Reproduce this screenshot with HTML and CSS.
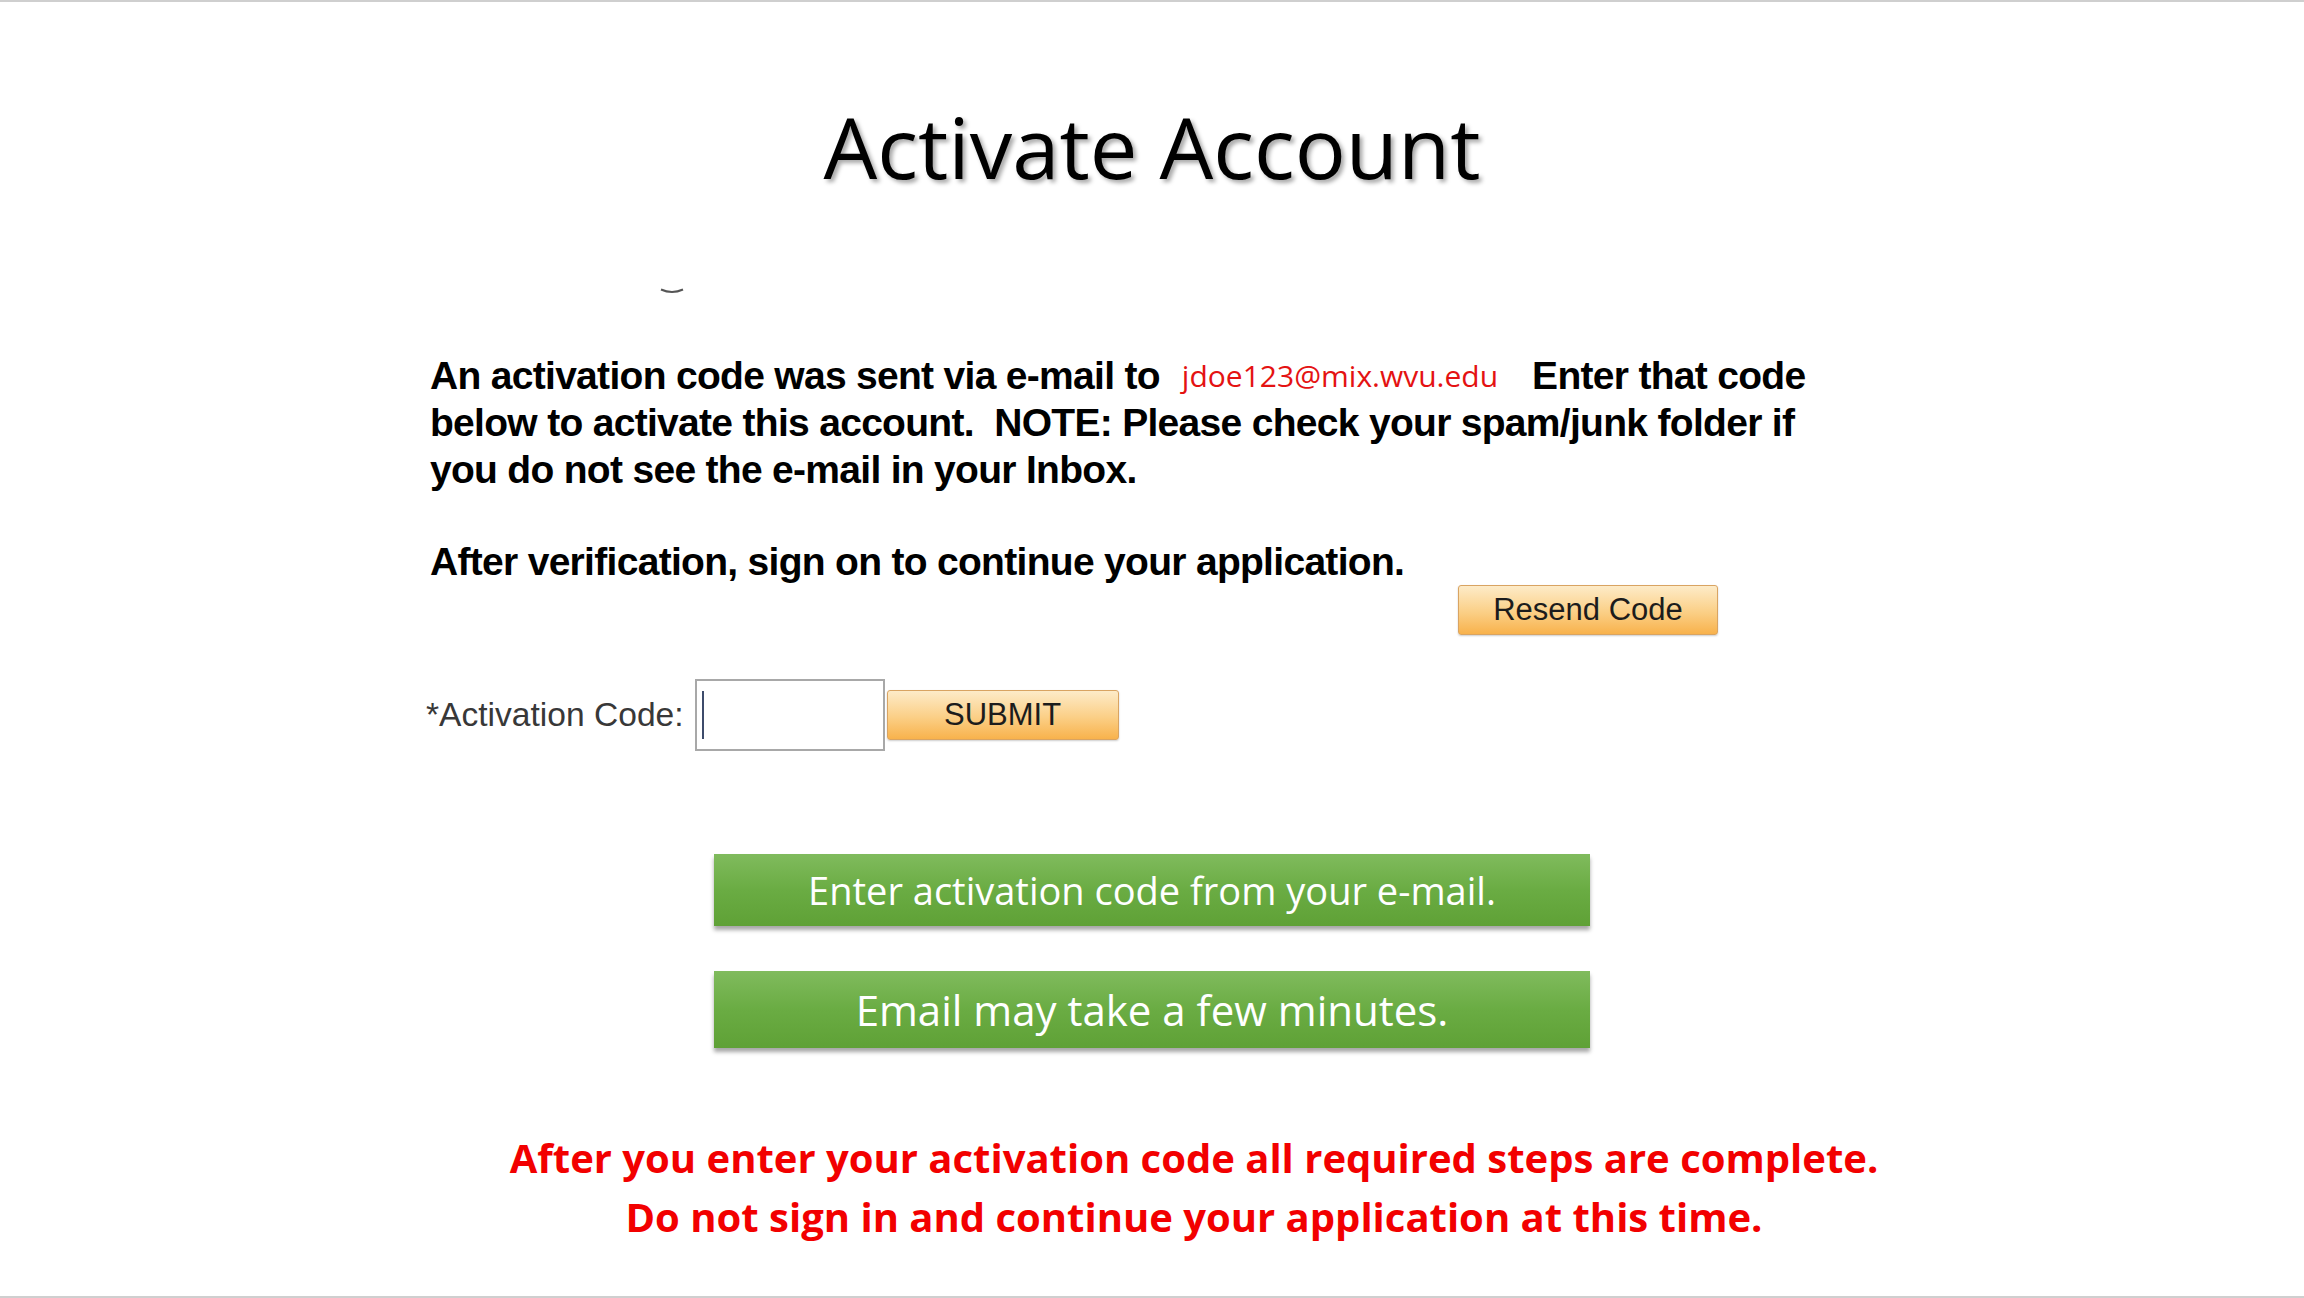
FILE: index.html
```html
<!DOCTYPE html>
<html lang="en">
<head>
  <meta charset="UTF-8" />
  <meta name="viewport" content="width=device-width, initial-scale=1" />
  <title>Activate Account</title>
  <link rel="stylesheet" href="styles.css">
</head>
<body>
  <div class="slide">
    <h1 class="title">Activate Account</h1>

    <div class="panel">
      <svg class="mark" width="24" height="6" viewBox="0 0 24 6" aria-hidden="true">
        <path d="M1 1.5 Q12 6.5 23 1.5" fill="none" stroke="#555" stroke-width="2" />
      </svg>

      <p class="message">
        An activation code was sent via e-mail to<span class="email">jdoe123@mix.wvu.edu</span><span class="after-email">Enter that code</span><br>
        below to activate this account.&nbsp; NOTE: Please check your spam/junk folder if<br>
        you do not see the e-mail in your Inbox.
      </p>

      <p class="message next-step">After verification, sign on to continue your application.</p>

      <div class="resend-row">
        <button class="orange-button resend-button">Resend Code</button>
      </div>

      <div class="code-row">
        <label for="code" class="code-label">*Activation Code:</label>
        <span class="code-field"><input type="text" id="code" /></span>
        <button class="orange-button submit-button">SUBMIT</button>
      </div>
    </div>

    <div class="hint">Enter activation code from your e-mail.</div>
    <div class="hint hint-large">Email may take a few minutes.</div>

    <p class="notice">
      After you enter your activation code all required steps are complete.<br>
      Do not sign in and continue your application at this time.
    </p>
  </div>
</body>
</html>
```

FILE: styles.css
```css
body {
  margin: 0;
  padding: 0;
  background-color: #fff;
  color: #000;
  font-family: "Open Sans", Arial, sans-serif;
}
.slide {
  height: 1298px;
  box-sizing: border-box;
  border-top: 2px solid #cfcfcf;
  border-bottom: 2px solid #cfcfcf;
  padding-top: 94px;
  display: flex;
  flex-direction: column;
}
.title {
  margin: 0;
  font-size: 85px;
  font-weight: 400;
  line-height: 100px;
  text-align: center;
  text-shadow: 3px 3px 4px rgba(0, 0, 0, 0.35);
}
.panel {
  width: 1444px;
  margin: 0 auto;
  display: flex;
  flex-direction: column;
}
.mark {
  display: block;
  margin: 92px 0 0 230px;
}
.message {
  margin: 58px 0 0;
  font-family: "Liberation Sans", Arial, sans-serif;
  font-weight: bold;
  font-size: 39px;
  letter-spacing: -0.7px;
  line-height: 47px;
  white-space: nowrap;
}
.email {
  margin-left: 22px;
  font-family: "Open Sans", sans-serif;
  font-weight: 500;
  font-size: 30px;
  letter-spacing: 0;
  color: #e41212;
  vertical-align: 2px;
}
.after-email {
  margin-left: 34px;
}
.next-step {
  margin-top: 45px;
}
.resend-row {
  display: flex;
  justify-content: flex-end;
  padding-right: 156px;
}
.orange-button {
  font-family: "Liberation Sans", Arial, sans-serif;
  font-size: 31px;
  color: #1c1c1c;
  height: 50px;
  padding: 0;
  background: linear-gradient(#fdebc8, #fbcf86 55%, #f8b24c);
  border: 1px solid #d9a462;
  border-radius: 3px;
  box-shadow: 0 1px 2px rgba(0, 0, 0, 0.2);
  cursor: pointer;
}
.resend-button {
  width: 260px;
}
.submit-button {
  width: 232px;
  margin-left: 2px;
}
.code-row {
  display: flex;
  align-items: center;
  margin: 44px 0 0 -4px;
}
.code-label {
  font-family: "Liberation Sans", Arial, sans-serif;
  font-size: 33.6px;
  color: #383838;
  margin-right: 11px;
}
.code-field {
  position: relative;
  display: block;
}
.code-field input {
  display: block;
  width: 190px;
  height: 72px;
  box-sizing: border-box;
  border: 2px solid #a8a8a8;
  background-color: #fff;
  outline: none;
}
.code-field::after {
  content: "";
  position: absolute;
  left: 7px;
  top: 12px;
  width: 2px;
  height: 48px;
  background-color: #3d4b6b;
}
.hint {
  width: 876px;
  height: 72px;
  margin: 103px auto 0;
  display: flex;
  align-items: center;
  justify-content: center;
  background: linear-gradient(#80bb5d, #6aac43 50%, #5fa136);
  box-shadow: 0 4px 4px rgba(0, 0, 0, 0.35);
  color: #fff;
  font-size: 38px;
}
.hint-large {
  height: 77px;
  margin-top: 45px;
  font-size: 42px;
}
.notice {
  margin: 80px 0 0;
  padding-left: 84px;
  text-align: center;
  color: #f20000;
  font-weight: bold;
  font-size: 40px;
  line-height: 59px;
}
```
